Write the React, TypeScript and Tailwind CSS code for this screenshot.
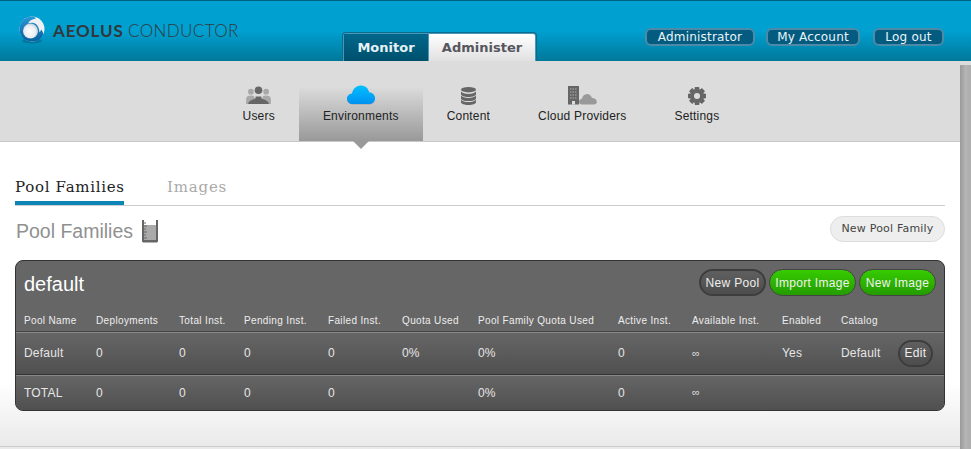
import React from "react";

const SANS = "font-['Liberation_Sans',Arial,sans-serif]";
const DEJA = "font-['DejaVu_Sans',sans-serif]";

const Logo = () => (
  <svg width="26" height="28" viewBox="0 0 26 28" className="shrink-0">
    <defs>
      <radialGradient id="ball" cx="45%" cy="55%" r="60%">
        <stop offset="0%" stopColor="#ffffff" />
        <stop offset="65%" stopColor="#e9edf2" />
        <stop offset="100%" stopColor="#b9c6d2" />
      </radialGradient>
      <linearGradient id="ring" x1="0" y1="0" x2="0" y2="1">
        <stop offset="0%" stopColor="#2a97d6" />
        <stop offset="100%" stopColor="#0560a0" />
      </linearGradient>
    </defs>
    <ellipse cx="13" cy="25" rx="10" ry="2.5" fill="#00607f" opacity="0.5" />
    <circle cx="13" cy="13" r="12.5" fill="#eef1f5" />
    <path d="M13 .5C5.500.5.500 6.500.500 13c0 7 5 12.500 12.500 12.500 6 0 10-3 11.500-7.500l-2-4.500-2 3c-.5-4-1-6-3.500-8.500-2.500-2-6-1.500-8-.5 1-2.500 4-4.500 8-5C15.500.800 14.500.500 13 .500Z" fill="url(#ring)" />
    <circle cx="11.500" cy="15" r="7.500" fill="url(#ball)" />
  </svg>
);

const UsersIcon = () => (
  <svg width="25" height="19" viewBox="0 0 26 20">
    <g fill="#a8a8a8">
      <circle cx="5" cy="6" r="3" />
      <path d="M0 19v-5c0-3 2-4 5-4s4 1 4 4v5Z" />
      <circle cx="21" cy="6" r="3" />
      <path d="M17 19v-5c0-3 1-4 4-4s5 1 5 4v5Z" />
    </g>
    <circle cx="13" cy="4.500" r="4" fill="#666" />
    <path d="M2 19c.5-3 3-4 6-5 2-.8 2-1.500 2-3h6c0 1.500 0 2.200 2 3 3 1 5.500 2 6 5Z" fill="#666" />
  </svg>
);

const CloudIcon = () => (
  <svg width="28" height="20" viewBox="0 0 28 20">
    <defs>
      <linearGradient id="cl" x1="0" y1="0" x2="0" y2="1">
        <stop offset="0%" stopColor="#00c0ff" />
        <stop offset="100%" stopColor="#0090f0" />
      </linearGradient>
    </defs>
    <path d="M6 19.500C2.500 19.500 0 17 0 14c0-3 2.200-5 5-5.300C6 4.500 8.800 1 14 1c4.500 0 7.500 3 8 6.800 3.500.3 6 2.700 6 5.900 0 3.300-2.500 5.800-6 5.800Z" fill="#7b8a94" opacity="0.6" />
    <path d="M6 19C2.500 19 0 16.700 0 13.700c0-3 2.200-5 5-5.300C6 4.300 8.800.5 14 .5c4.500 0 7.500 3 8 6.800 3.500.3 6 2.700 6 5.900 0 3.300-2.500 5.800-6 5.800Z" fill="url(#cl)" />
  </svg>
);

const DbIcon = () => (
  <svg width="15" height="18" viewBox="0 0 15 18" fill="#666">
    <ellipse cx="7.500" cy="2.700" rx="7.500" ry="2.700" />
    <path d="M0 4.500c1 1.700 4 2.400 7.500 2.400S14 6.200 15 4.500v2.700c0 1.500-3.400 2.700-7.500 2.700S0 8.700 0 7.200Z" />
    <path d="M0 8.600c1 1.700 4 2.400 7.500 2.400S14 10.300 15 8.600v2.800c0 1.500-3.400 2.700-7.500 2.700S0 12.900 0 11.400Z" />
    <path d="M0 12.700c1 1.700 4 2.400 7.500 2.400s6.500-.7 7.500-2.400v2.600c0 1.500-3.400 2.700-7.500 2.700S0 16.800 0 15.300Z" />
  </svg>
);

const ProviderIcon = () => (
  <svg width="29" height="19" viewBox="0 0 29 19">
    <path d="M14 18.500c-2 0-3-1.200-3-2.800 0-1.700 1.300-2.900 3-3 .3-2.500 2.200-4.700 5-4.700 2.600 0 4.400 1.700 5 4 2.600 0 4.800 1.500 4.800 3.800 0 1.700-1 2.700-2.800 2.700Z" fill="#999" />
    <rect x="0" y="0" width="11" height="18.500" fill="#666" />
    <g fill="#8a8a8a">
      {[2, 4.500, 7].map((x) =>
        [2, 5, 8, 11].map((y) => <rect key={`${x}-${y}`} x={x} y={y} width="1.500" height="2" />)
      )}
    </g>
    <rect x="4" y="15" width="3" height="3.500" fill="#ddd" />
  </svg>
);

const GearIcon = () => (
  <svg width="18" height="18" viewBox="0 0 18 18">
    <g fill="#666">
      {[0, 45, 90, 135, 180, 225, 270, 315].map((a) => (
        <rect key={a} x="6.800" y="0" width="4.400" height="18" rx="0.8" transform={`rotate(${a} 9 9)`} />
      ))}
      <circle cx="9" cy="9" r="7" />
    </g>
    <circle cx="9" cy="9" r="3" fill="#dcdcdc" />
  </svg>
);

const Beaker = () => (
  <svg width="18" height="23" viewBox="0 0 18 23">
    <rect x="3" y="5" width="12" height="16" fill="#aaa" />
    <path d="M1 0h2v20h12V0h2v21.500l-1 1H2l-1-1Z" fill="#666" />
    <path d="M3 3h2M3 6h3M3 9h2M3 12h3M3 15h2M3 18h3" stroke="#666" strokeWidth="1" />
  </svg>
);

const navItems = [
  { label: "Users", icon: <UsersIcon /> },
  { label: "Environments", icon: <CloudIcon />, active: true },
  { label: "Content", icon: <DbIcon /> },
  { label: "Cloud Providers", icon: <ProviderIcon /> },
  { label: "Settings", icon: <GearIcon /> },
];

const COLS = "grid grid-cols-[72px_83px_65px_84px_74px_76px_140px_74px_90px_59px_57px_1fr] pl-2";

const headers = ["Pool Name", "Deployments", "Total Inst.", "Pending Inst.", "Failed Inst.", "Quota Used", "Pool Family Quota Used", "Active Inst.", "Available Inst.", "Enabled", "Catalog", ""];
const def = ["Default", "0", "0", "0", "0", "0%", "0%", "0", "∞", "Yes", "Default"];
const total = ["TOTAL", "0", "0", "0", "0", "", "0%", "0", "∞", "", "", ""];

const cellClass = (v: string) =>
  v === "∞" ? "text-[11px] text-[#dddddd]" : "text-[12px] text-[#e6e6e6] tracking-[0.2px]";

const PillDark = ({ children, className = "" }: { children: React.ReactNode; className?: string }) => (
  <button className={`h-[27px] rounded-full border-2 border-[#3d3d3d] bg-gradient-to-b from-[#5f5f5f] to-[#4d4d4d] text-[12px] text-[#eeeeee] tracking-[0.3px] ${className}`}>
    {children}
  </button>
);
const PillGreen = ({ children, className = "" }: { children: React.ReactNode; className?: string }) => (
  <button className={`h-[27px] rounded-full border border-[#444] bg-gradient-to-b from-[#36cc00] to-[#249c00] text-[12px] tracking-[0.3px] text-[#f2f2f2] ${className}`}>
    {children}
  </button>
);

const TopBtn = ({ children, className = "" }: { children: React.ReactNode; className?: string }) => (
  <a className={`flex h-[18px] items-center justify-center rounded-[6px] border-2 border-[#4c8aa8] bg-[#045b80] text-[12px] leading-none text-[#eaf4f8] tracking-[0.2px] ${className}`}>
    {children}
  </a>
);

export default function App() {
  return (
    <div className={`flex h-[449px] w-[971px] flex-col overflow-hidden bg-[#dcdcdc] ${SANS}`}>
      <header className="flex h-[61px] shrink-0 border-t border-[#00607f] bg-[linear-gradient(#00a0d0_0%,#00a0d0_50%,#00789a_100%)]">
        <div className="ml-[19px] mt-[15px] flex h-[30px] w-[219px] shrink-0 items-start gap-2">
          <Logo />
          <div className="mt-[5px] whitespace-nowrap font-['Lato',sans-serif] text-[17px] leading-5 text-[#33383c]">
            <span className="font-bold tracking-[0.85px]">AEOLUS</span> <span className="font-light tracking-[0.4px]">CONDUCTOR</span>
          </div>
        </div>
        <div className="ml-[104px] mt-[31px] flex h-[29px] shrink-0 self-start rounded-t-[4px] border border-b-0 border-[#0a6c8e] bg-[#4b97b5] pt-px pl-px pr-px">
          <div className={`flex h-[28px] w-[84px] items-center justify-center bg-gradient-to-b from-[#00688c] to-[#004f6c] text-[13px] font-bold text-[#e6f2f6] ${DEJA}`}>Monitor</div>
          <div className={`ml-px flex h-[31px] w-[106px] items-center justify-center rounded-tr-[2px] bg-gradient-to-b from-[#ffffff] to-[#dcdcdc] pb-[3px] text-[13px] font-bold text-[#56565e] ${DEJA}`}>Administer</div>
        </div>
        <div className={`ml-[108px] mt-[27px] flex self-start ${DEJA}`}>
          <TopBtn className="w-[110px]">Administrator</TopBtn>
          <TopBtn className="ml-[11px] w-[94px]">My Account</TopBtn>
          <TopBtn className="ml-[13px] w-[71px]">Log out</TopBtn>
        </div>
      </header>

      <div className="flex min-h-0 flex-1">
        <div className="flex w-[960px] shrink-0 flex-col">
          <nav className="flex h-[81px] shrink-0 justify-center border-b border-[#c8c8c8] bg-[#dcdcdc] pl-[2px]">
            {navItems.map((n) => (
              <div
                key={n.label}
                className={`relative flex h-[80px] flex-col items-center px-6 ${n.active ? "bg-[linear-gradient(#dcdcdc_0%,#dcdcdc_32%,#999999_100%)]" : ""}`}
              >
                <div className="mt-[20px] flex h-[24px] w-full items-end justify-center">{n.icon}</div>
                <div className="mt-[3px] text-[12px] leading-[16px] whitespace-nowrap tracking-[0.2px] text-[#222]">{n.label}</div>
                {n.active && (
                  <div className="absolute left-1/2 top-[80px] h-0 w-0 -translate-x-1/2 border-x-[8px] border-t-[8px] border-x-transparent border-t-[#999999]" />
                )}
              </div>
            ))}
          </nav>
          <main className="flex-1 bg-[linear-gradient(#ffffff_0%,#ffffff_78%,#e9e9e9_100%)] px-[15px]">
            <div className="mt-[29px] flex h-[35px] items-start border-b border-[#cccccc] font-['DejaVu_Serif',serif]">
              <div className="h-[34px] w-[109px] border-b-4 border-[#0a85b5] pt-[6px] text-[15px] leading-5 whitespace-nowrap tracking-[0.7px] text-[#222]">Pool Families</div>
              <div className="ml-[43px] pt-[6px] text-[15px] leading-5 tracking-[0.8px] text-[#aaaaaa]">Images</div>
            </div>
            <div className="mt-[10px] flex h-[26px] items-center">
              <h1 className="mt-[4px] ml-px text-[19.5px] font-normal leading-6 text-[#909090]">Pool Families</h1>
              <span className="ml-[8px] mt-[4px]"><Beaker /></span>
              <button className={`ml-auto h-[26px] w-[115px] rounded-full border border-[#dddddd] bg-[#eeeeee] text-[11px] tracking-[0.2px] text-[#444] ${DEJA}`}>New Pool Family</button>
            </div>
            <section className="mt-[18px] h-[151px] overflow-hidden rounded-[8px] border border-[#333333] bg-[#666666] text-[#eeeeee]">
              <div className="flex h-[49px] items-start justify-between pl-2 pr-2">
                <h2 className="mt-[11px] text-[20px] font-normal leading-6 text-white">default</h2>
                <div className="mt-[8px] flex">
                  <PillDark className="w-[67px]">New Pool</PillDark>
                  <PillGreen className="ml-[3px] w-[87px]">Import Image</PillGreen>
                  <PillGreen className="ml-[3px] w-[77px]">New Image</PillGreen>
                </div>
              </div>
              <div className={`${COLS} h-[21px] items-center text-[10px] tracking-[0.35px] text-[#eeeeee]`}>
                {headers.map((h, i) => <div key={i} className="whitespace-nowrap">{h}</div>)}
              </div>
              <div className={`${COLS} h-[44px] items-center border-t border-b border-t-[#444] border-b-[#333] bg-gradient-to-b from-[#666666] to-[#505050] shadow-[inset_0_1px_0_#888]`}>
                {def.map((v, i) => <div key={i} className={cellClass(v)}>{v}</div>)}
                <div className="flex justify-start">
                  <button className="h-[27px] w-[35px] rounded-full border-2 border-[#3d3d3d] bg-gradient-to-b from-[#5f5f5f] to-[#4d4d4d] text-[12px] tracking-[0.3px] text-[#eeeeee]">Edit</button>
                </div>
              </div>
              <div className={`${COLS} h-[35px] items-center bg-gradient-to-b from-[#666666] to-[#505050] shadow-[inset_0_1px_0_#888]`}>
                {total.map((v, i) => <div key={i} className={cellClass(v)}>{v}</div>)}
              </div>
            </section>
            <div className="-mx-[15px] mt-[35px] h-px bg-[#cccccc]" />
          </main>
        </div>
        <aside className="mt-[4px] flex-1 bg-[linear-gradient(90deg,#9a9a9a,#b4b4b4_50%,#adadad)]" />
      </div>
    </div>
  );
}
